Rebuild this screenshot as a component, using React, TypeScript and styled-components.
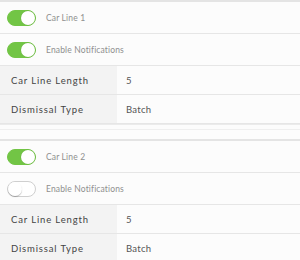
import React, { useState } from "react";
import styled, { createGlobalStyle } from "styled-components";

const Global = createGlobalStyle`
  html, body { margin: 0; padding: 0; background: #fcfcfc; }
  body { font-family: Lato, "Noto Sans", sans-serif; width: 300px; height: 260px; overflow: hidden; }
`;

const Page = styled.div`
  display: flex;
  flex-direction: column;
  width: 300px;
`;

const Card = styled.section`
  display: flex;
  flex-direction: column;
  border-top: 2px solid #e4e4e4;
`;

const Spacer = styled.div`
  height: 15px;
  border-top: 1px solid #ebebeb;
  display: flex;
  flex-direction: column;
  padding-top: 4px;
  box-sizing: border-box;
  &::after {
    content: "";
    border-top: 1px solid #efefef;
  }
`;

const ToggleRow = styled.div`
  display: flex;
  align-items: center;
  height: 30px;
  border-bottom: 1px solid #e6e6e6;
  padding-left: 7px;
  padding-top: 1px;
  gap: 10px;
`;

const Track = styled.button<{ $on: boolean }>`
  position: relative;
  width: 29px;
  height: 16px;
  border-radius: 8px;
  padding: 0;
  box-sizing: border-box;
  cursor: pointer;
  border: 1px solid ${(p) => (p.$on ? "#72c545" : "#cfcfcf")};
  background: ${(p) => (p.$on ? "#72c545" : "#ffffff")};
`;

const Knob = styled.span<{ $on: boolean }>`
  position: absolute;
  top: 0;
  left: ${(p) => (p.$on ? "13px" : "0")};
  width: 14px;
  height: 14px;
  border-radius: 50%;
  background: #ffffff;
  box-shadow: ${(p) => (p.$on ? "0 0 0 0.5px rgba(0,0,0,0.08)" : "0 1px 1px rgba(0,0,0,0.25)")};
`;

const ToggleLabel = styled.span`
  font-size: 8.5px;
  color: #8f8f8f;
  letter-spacing: 0.15px;
`;

const DataRow = styled.div`
  display: grid;
  grid-template-columns: 117px 1fr;
  height: 28px;
  border-bottom: 1px solid #e6e6e6;
`;

const KeyCell = styled.div`
  background: #f3f3f3;
  display: flex;
  align-items: center;
  padding-left: 11px;
  font-size: 9.5px;
  color: #444;
  letter-spacing: 0.85px;
`;

const ValueCell = styled.div`
  display: flex;
  align-items: center;
  padding-left: 9px;
  font-size: 9.5px;
  color: #555;
  letter-spacing: 0.3px;
`;

function Toggle({ initial, label }: { initial: boolean; label: string }) {
  const [on, setOn] = useState(initial);
  return (
    <ToggleRow>
      <Track $on={on} onClick={() => setOn(!on)} aria-pressed={on}>
        <Knob $on={on} />
      </Track>
      <ToggleLabel>{label}</ToggleLabel>
    </ToggleRow>
  );
}

function CarLine({ name, notify }: { name: string; notify: boolean }) {
  return (
    <Card>
      <Toggle initial={true} label={name} />
      <Toggle initial={notify} label="Enable Notifications" />
      <DataRow>
        <KeyCell>Car Line Length</KeyCell>
        <ValueCell>5</ValueCell>
      </DataRow>
      <DataRow>
        <KeyCell>Dismissal Type</KeyCell>
        <ValueCell>Batch</ValueCell>
      </DataRow>
    </Card>
  );
}

export default function App() {
  return (
    <Page>
      <Global />
      <CarLine name="Car Line 1" notify={true} />
      <Spacer />
      <CarLine name="Car Line 2" notify={false} />
    </Page>
  );
}
